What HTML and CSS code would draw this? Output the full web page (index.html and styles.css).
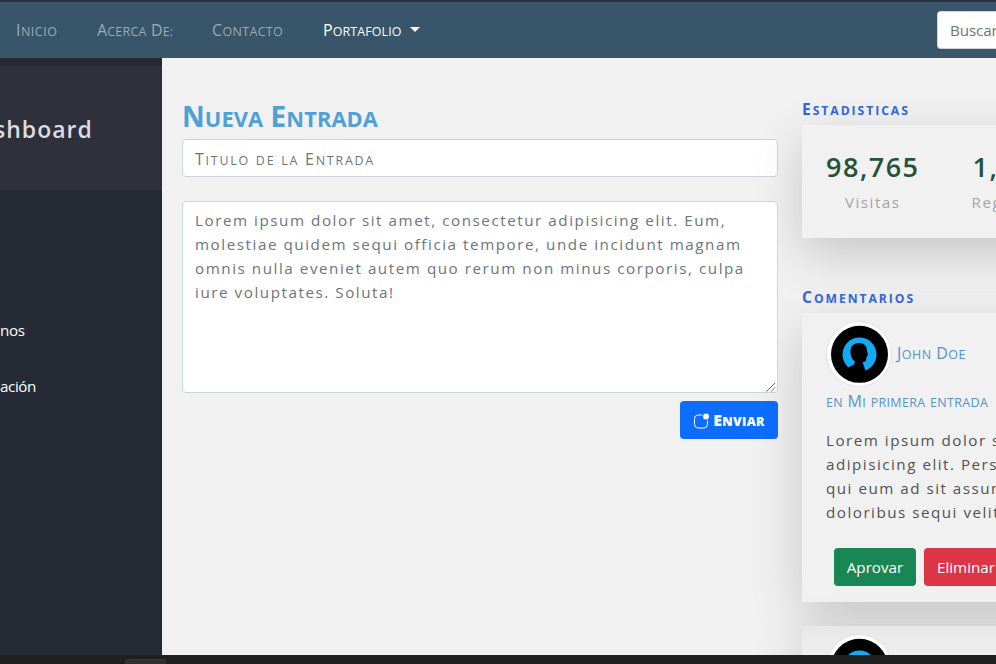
FILE: index.html
```html
<!DOCTYPE html>
<html lang="es">
<head>
<meta charset="utf-8">
<title>Dashboard</title>
<link rel="stylesheet" href="styles.css">
</head>
<body>
<header class="navbar">
  <nav class="nav">
    <a class="nav-link inicio"><span><b class="w cap">Inicio</b></span></a>
    <a class="nav-link acerca"><span><b class="w cap">Acerca</b> <b class="w cap">De:</b></span></a>
    <a class="nav-link contacto"><span><b class="w cap">Contacto</b></span></a>
    <a class="nav-link active"><span><b class="w cap">Portafolio</b></span><i class="caret"></i></a>
  </nav>
  <div class="search"><span>Buscar</span></div>
</header>
<div class="page">
  <aside class="sidebar">
    <div class="brand"><span>shboard</span></div>
    <ul class="menu">
      <li><span>nos</span></li>
      <li><span>ación</span></li>
    </ul>
  </aside>
  <main class="main">
    <section class="editor">
      <h1><span><b class="w cap">Nueva</b> <b class="w cap">Entrada</b></span></h1>
      <div class="field title"><span><b class="w cap">Titulo</b> <b class="w">de</b> <b class="w">la</b> <b class="w cap">Entrada</b></span></div>
      <div class="field area">
        <p><span>Lorem ipsum dolor sit amet, consectetur adipisicing elit. Eum,</span><br><span>molestiae quidem sequi officia tempore, unde incidunt magnam</span><br><span>omnis nulla eveniet autem quo rerum non minus corporis, culpa</span><br><span>iure voluptates. Soluta!</span></p>
        <svg class="grip" viewBox="0 0 10 10" width="10" height="10"><path d="M0.5 9.5L9 1M5 9.5L9 5.5"/></svg>
      </div>
      <div class="btn send">
        <svg viewBox="0 0 16 16" width="16" height="16" fill="#fff"><path d="M14.500 7.500v3.700a3.800 3.800 0 0 1-3.800 3.800H5.300a3.800 3.800 0 0 1-3.800-3.800V5.800a3.800 3.800 0 0 1 3.800-3.800H9" fill="none" stroke="#fff"/><circle cx="13" cy="3.500" r="3"/></svg>
        <span><b class="w cap">Enviar</b></span>
      </div>
    </section>
    <section class="side">
      <h2 class="h-stats"><span><b class="w cap">Estadisticas</b></span></h2>
      <div class="card stats">
        <div class="stat"><strong><span>98,765</span></strong><small><span>Visitas</span></small></div>
        <div class="stat"><strong>1,234</strong><small>Registros</small></div>
      </div>
      <h2 class="h-comments"><span><b class="w cap">Comentarios</b></span></h2>
      <article class="card comment">
        <div class="author">
          <svg class="avatar" viewBox="0 0 66 66" width="66" height="66"><circle cx="33" cy="33" r="32.500" fill="#fff" stroke="#dee2e6"/><circle cx="33.500" cy="33.300" r="28.500" fill="#000"/><circle cx="33.500" cy="33.500" r="17" fill="#12a9f5"/><path d="M18 53L22 46.500L28 43.500L29 40.500C25 38 24.300 33 24.500 29C25 24 29 22 33 22C38 22 41 25 40.800 29L42 34L40.500 36L40 40L36.500 41.500L38 45L40 52Z"/></svg>
          <a class="name"><span><b class="w cap">John</b> <b class="w cap">Doe</b></span></a>
        </div>
        <a class="entry"><span><b class="w">en</b> <b class="w cap">Mi</b> <b class="w">primera</b> <b class="w">entrada</b></span></a>
        <p class="text">Lorem ipsum dolor sit amet<br>adipisicing elit. Perspiciatis<br>qui eum ad sit assumenda<br>doloribus sequi velit</p>
        <div class="actions"><a class="btn ok">Aprovar</a><a class="btn del">Eliminar</a></div>
      </article>
      <article class="card comment next">
        <div class="author">
          <svg class="avatar" viewBox="0 0 66 66" width="66" height="66"><circle cx="33" cy="33" r="32.500" fill="#fff" stroke="#dee2e6"/><circle cx="33.500" cy="33.300" r="28.500" fill="#000"/><circle cx="33.500" cy="33.500" r="17" fill="#12a9f5"/><path d="M18 53L22 46.500L28 43.500L29 40.500C25 38 24.300 33 24.500 29C25 24 29 22 33 22C38 22 41 25 40.800 29L42 34L40.500 36L40 40L36.500 41.500L38 45L40 52Z"/></svg>
        </div>
      </article>
    </section>
  </main>
</div>
<footer class="taskbar"><div class="tab"></div></footer>
</body>
</html>
```
FILE: styles.css
```css
* { box-sizing: border-box; }
body { margin: 0; width: 996px; height: 664px; overflow: hidden; display: flex; flex-direction: column; background: #f1f1f1; font: 15.2px/24px "Open Sans", "Noto Sans", sans-serif; white-space: nowrap; }
h1, h2, p, ul { margin: 0; padding: 0; font-weight: 400; }
.w { display: inline-block; font-weight: inherit; font-size: .78em; text-transform: uppercase; }
.cap::first-letter { font-size: 1.28em; }
.navbar { flex: none; height: 58px; background: #395569; border-top: 2px solid #2b3240; display: flex; justify-content: space-between; align-items: center; padding-left: 16px; overflow: hidden; }
.nav { display: flex; color: #9caab4; font-size: 16px; padding-top: 2px; }
.nav-link { display: flex; align-items: center; }
.inicio { width: 81px; letter-spacing: .5px; }
.acerca { width: 115px; letter-spacing: .2px; }
.contacto { width: 111px; letter-spacing: .35px; }
.active { color: #fff; letter-spacing: .1px; }
.caret { border: 5px solid transparent; border-top-color: #fff; border-bottom: 0; margin: -4px 0 0 8px; }
.search { flex: none; width: 59px; height: 38px; background: #fff; border: 1px solid #ced4da; border-right: 0; border-radius: 4px 0 0 4px; padding: 6px 12px; color: #6c757d; overflow: hidden; letter-spacing: -.1px; }
.page { flex: none; height: 597px; display: flex; overflow: hidden; }
.sidebar { flex: none; width: 162px; background: #262a34; padding-top: 8px; color: #fff; overflow: hidden; }
.brand { height: 124px; background: #2e303b; font-size: 23px; font-weight: 600; color: #dcdcdf; padding-top: 51px; letter-spacing: 1px; text-indent: -6px; }
.menu { list-style: none; padding-top: 128px; letter-spacing: -.4px; }
.menu li { height: 56px; }
.main { flex: 1; display: flex; padding: 0 0 0 20px; gap: 24px; }
.editor { width: 596px; flex: none; padding-top: 41px; display: flex; flex-direction: column; }
h1 { height: 40px; line-height: 34px; font-size: 28px; font-weight: 700; color: #4ea0d5; letter-spacing: .1px; }
.field { height: 38px; background: #fff; border: 1px solid #ced4da; border-radius: 4px; padding: 6px 12px; color: #6c757d; letter-spacing: 1.55px; }
.title { font-size: 16px; letter-spacing: 1.75px; padding-top: 7px; }
.area { position: relative; height: 192px; margin-top: 24px; }
.grip { position: absolute; right: 1px; bottom: 0; fill: none; stroke: #666; stroke-width: 1; }
.btn { height: 38px; border-radius: 4px; color: #fff; display: flex; align-items: center; justify-content: center; }
.send { align-self: flex-end; width: 98px; margin-top: 8px; padding-top: 2px; background: #0d6efd; font-size: 16px; font-weight: 800; letter-spacing: .3px; gap: 4px; }
.side { width: 400px; flex: none; padding-top: 39px; }
h2 { height: 28px; font-size: 15.6px; font-weight: 700; color: #3066da; letter-spacing: 1.95px; }
.h-comments { margin-top: 47px; }
.card { background: #f1f1f1; box-shadow: 0 16px 48px rgba(0, 0, 0, .175); }
.stats { height: 113px; padding: 24px; display: flex; gap: 52px; }
.stat { text-align: center; display: flex; flex-direction: column; }
.stat strong { font-size: 27px; line-height: 36px; font-weight: 600; color: #275239; letter-spacing: 1.5px; }
.stat small { font-size: 15.2px; line-height: 24px; margin-top: 5px; color: #a4a4a6; letter-spacing: 1.5px; }
.comment { height: 289px; padding: 8px 24px; }
.author { display: flex; align-items: center; height: 66px; gap: 5px; }
.name, .entry { color: #5494c8; font-size: 16px; letter-spacing: .35px; }
.name { margin-top: -1px; letter-spacing: .5px; }
.entry { display: block; margin-top: 2px; height: 24px; }
.text { margin-top: 15px; color: #515153; letter-spacing: 1.5px; }
.actions { display: flex; gap: 8px; margin: 24px 0 0 8px; }
.ok { width: 82px; background: #198754; }
.del { width: 84px; background: #dc3545; }
.next { margin-top: 24px; background: linear-gradient(#e7e7e7, #f1f1f1 40px); }
.taskbar { flex: none; height: 9px; background: #202020; padding: 4px 0 0 125px; }
.tab { width: 41px; height: 5px; background: #303030; border: 1px solid #3a3a3a; border-bottom: 0; border-radius: 4px 4px 0 0; }
```
